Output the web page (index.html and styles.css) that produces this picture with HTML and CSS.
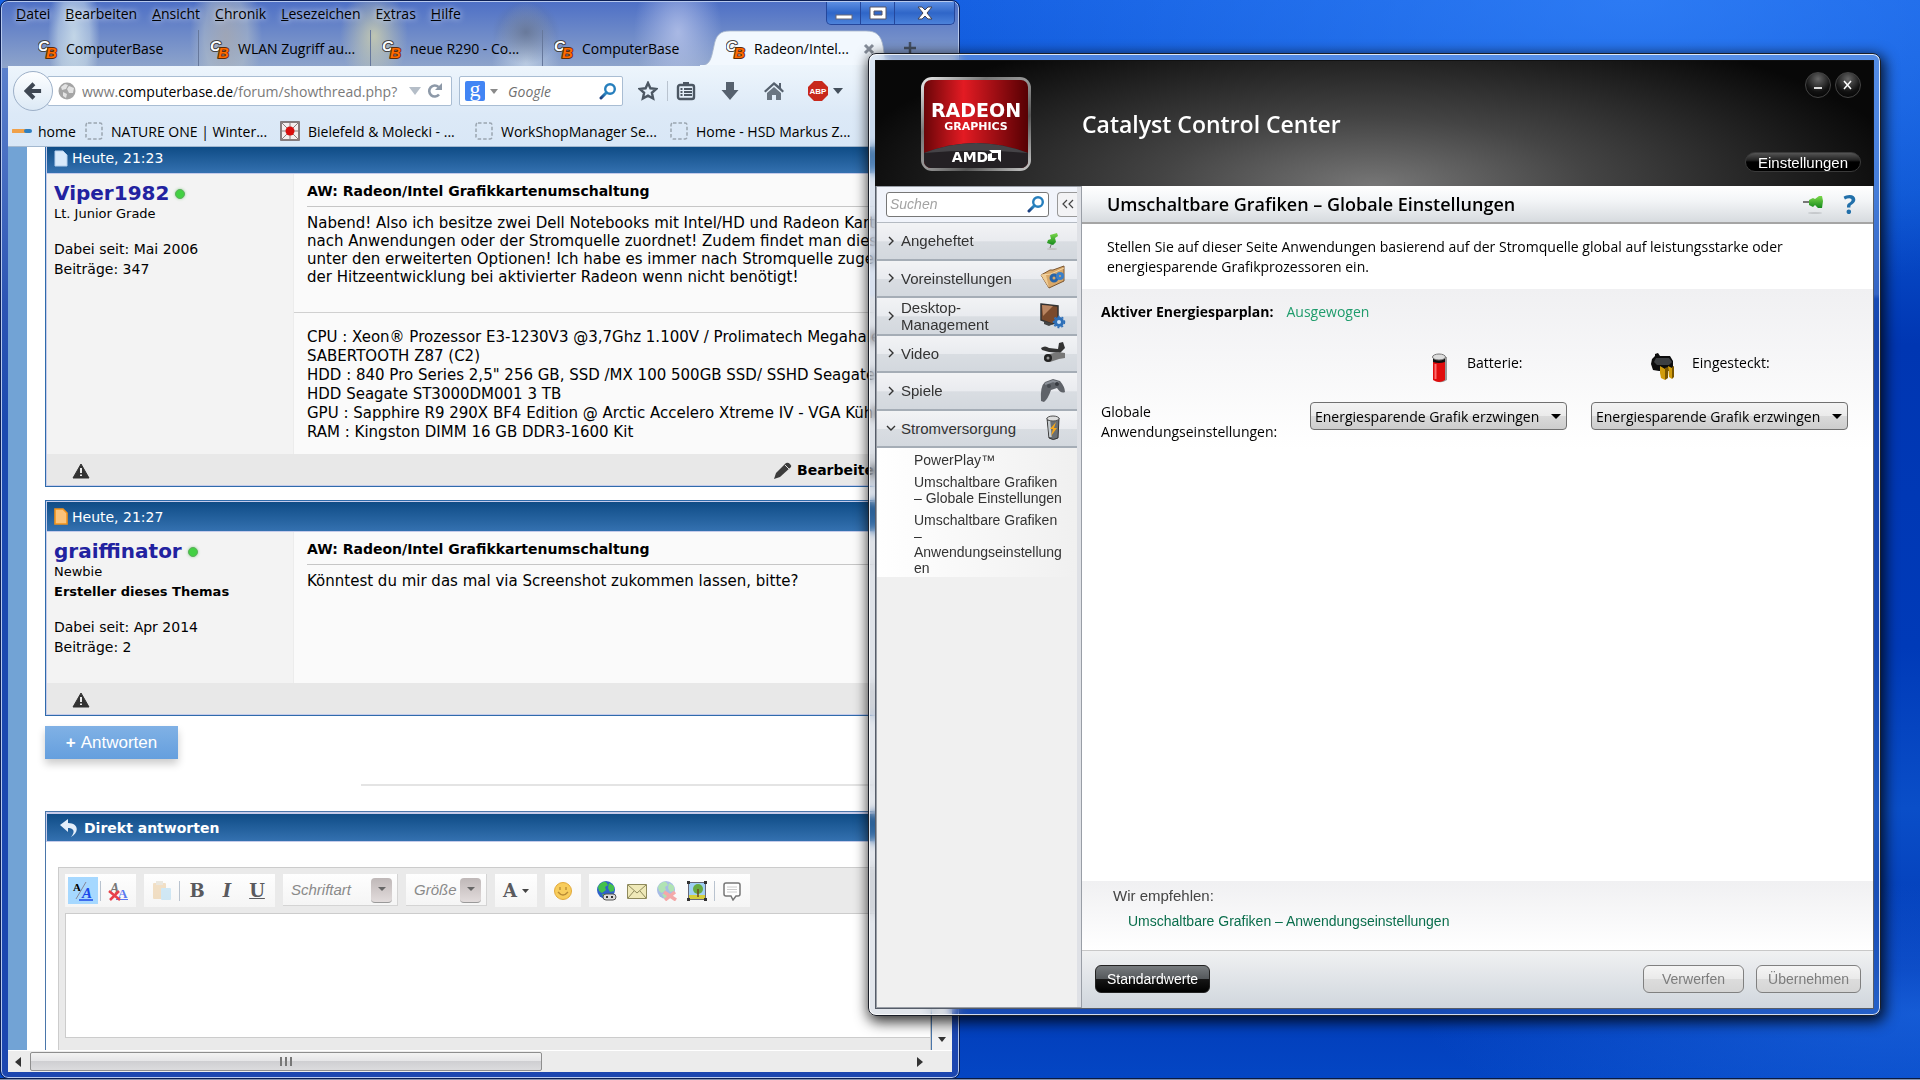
FILE: index.html
```
<!DOCTYPE html>
<html lang="de">
<head>
  <meta charset="UTF-8">
  <meta name="viewport" content="width=device-width, initial-scale=1.0">
  <title>Desktop</title>
  <link rel="stylesheet" href="styles.css">
</head>
<body>
  <svg class="defs" aria-hidden="true">
    <defs>
      <linearGradient id="lensBlue" x1="1" y1="0" x2="0" y2="1"><stop offset="0" stop-color="#2f9ad4"/><stop offset="1" stop-color="#1c3f80"/></linearGradient>
      <linearGradient id="silver" x1="0" y1="0" x2="1" y2="1"><stop offset="0" stop-color="#eee"/><stop offset=".3" stop-color="#777"/><stop offset=".5" stop-color="#999"/><stop offset=".7" stop-color="#555"/><stop offset="1" stop-color="#ccc"/></linearGradient>
      <linearGradient id="red"><stop offset="0" stop-color="#6a0508"/><stop offset=".38" stop-color="#e31b23"/><stop offset="1" stop-color="#560003"/></linearGradient>
      <linearGradient id="pinGreen" x1="0" y1="0" x2="0" y2="1"><stop offset="0" stop-color="#7bd84b"/><stop offset="1" stop-color="#168a1c"/></linearGradient>
    </defs>
    <symbol id="cb" viewBox="0 0 20 20" overflow="visible">
      <g font-family="Liberation Sans" font-weight="bold" font-style="italic" stroke-linejoin="round" paint-order="stroke">
        <text x="0" y="12" font-size="15" fill="#fff" stroke="#444" stroke-width="2">C</text>
        <text x="8" y="19" font-size="15" fill="#ff6a00" stroke="#5a2a08" stroke-width="2">B</text>
      </g>
    </symbol>
    <symbol id="lens" viewBox="0 0 18 18">
      <path d="M2 16l5.500-5.500" stroke="url(#lensBlue)" stroke-width="3" stroke-linecap="round"/>
      <circle cx="11" cy="7" r="4.800" fill="none" stroke="#277fbd" stroke-width="2.400"/>
    </symbol>
    <symbol id="blank" viewBox="0 0 18 18">
      <rect x="1" y="1" width="16" height="16" rx="2" fill="none" stroke="#9aa5b0" stroke-width="1.500" stroke-dasharray="3.500 2"/>
    </symbol>
    <symbol id="warn" viewBox="0 0 18 16">
      <path d="M9 1l8 14H1z" fill="#333" stroke="#333" stroke-linejoin="round"/>
      <path d="M9 5v5M9 11.500v1.500" stroke="#fff" stroke-width="1.800"/>
    </symbol>
    <symbol id="chev" viewBox="0 0 8 10"><path d="M2 1l4 4-4 4" fill="none" stroke="#333" stroke-width="1.400"/></symbol>
    <symbol id="globe" viewBox="0 0 20 20">
      <circle cx="9" cy="9" r="9" fill="#2e62c8"/>
      <path d="M1 6C3 1 8 0 9 1l2 3-3 2 1 3-4 3-3-2zM12 2l5 3 0 5-4 1-2-4zM5 13l5 0 1 4-4 0z" fill="#43c04c"/>
    </symbol>
  </svg>

  <main class="desktop">
    <section class="window browser" aria-label="Firefox">
      <div class="titlebar">
        <nav class="menubar">
          <a href="#"><u>D</u>atei</a>
          <a href="#"><u>B</u>earbeiten</a>
          <a href="#"><u>A</u>nsicht</a>
          <a href="#"><u>C</u>hronik</a>
          <a href="#"><u>L</u>esezeichen</a>
          <a href="#">E<u>x</u>tras</a>
          <a href="#"><u>H</u>ilfe</a>
        </nav>
        <div class="caption-buttons">
          <button aria-label="Minimieren"><svg width="18" height="14" viewBox="0 0 18 14"><rect x="1" y="9" width="16" height="4" fill="#fff" stroke="#667"/></svg></button>
          <button aria-label="Maximieren"><svg width="18" height="14" viewBox="0 0 18 14"><path d="M1 1h16v12H1zM5 5v4h8V5z" fill="#fff" stroke="#556" fill-rule="evenodd"/></svg></button>
          <button class="caption-close" aria-label="Schließen"><svg width="16" height="14" viewBox="0 0 16 14"><path d="M1 1h4l3 3 3-3h4l-5 6 5 6h-4l-3-3-3 3H1l5-6z" fill="#fff" stroke="#445"/></svg></button>
        </div>
      </div>
      <div class="tabs">
        <a class="tab" href="#"><svg width="20" height="20"><use href="#cb"/></svg>ComputerBase</a>
        <a class="tab" href="#"><svg width="20" height="20"><use href="#cb"/></svg>WLAN Zugriff au...</a>
        <a class="tab" href="#"><svg width="20" height="20"><use href="#cb"/></svg>neue R290 - Co...</a>
        <a class="tab last" href="#"><svg width="20" height="20"><use href="#cb"/></svg>ComputerBase</a>
        <div class="tab active">
          <svg class="tab-shape" viewBox="0 0 190 36" aria-hidden="true"><path d="M0 36C10 35 11 30 14 16 16 5 20 1 30 1H166C176 1 181 5 183 16 185 30 186 35 190 36z" fill="#f2f8fe" stroke="#a9b8cc" stroke-width=".8"/><path d="M0 35.500h190" stroke="#edf5fc"/></svg>
          <svg width="20" height="20"><use href="#cb"/></svg><span>Radeon/Intel...</span>
          <button aria-label="Tab schließen"><svg width="12" height="12"><path d="M2 2l8 8M10 2l-8 8" stroke="#858d99" stroke-width="3"/></svg></button>
        </div>
        <button class="new-tab" aria-label="Neuer Tab"><svg width="14" height="14"><path d="M7 1v12M1 7h12" stroke="#444f60" stroke-width="2.500"/></svg></button>
      </div>

      <div class="toolbars">
        <div class="navbar">
          <button class="back" aria-label="Zurück"><svg width="18" height="18" viewBox="0 0 20 20"><path d="M11 2L3 10l8 8M4 10h15" fill="none" stroke="#3e4753" stroke-width="4.500"/></svg></button>
          <label class="urlbar">
            <svg width="18" height="18" viewBox="0 0 18 18"><circle cx="9" cy="9" r="8.500" fill="#a5a5a5"/><path d="M3 5l4-3 3 1-2 4-4 1zM11 4l5 2-1 5-4 0-2-4zM5 10l4 2-1 4-3-2z" fill="#e3e3e3"/></svg>
            <span class="url">www.<b>computerbase.de</b>/forum/showthread.php?</span>
            <svg width="12" height="10"><path d="M0 1h12L6 9z" fill="#b5bec8"/></svg>
            <svg width="16" height="16" viewBox="0 0 16 16"><path d="M12 11.500A5.500 5.500 0 1 1 11.500 4" fill="none" stroke="#8d99a8" stroke-width="2.600"/><path d="M15 0v7H8z" fill="#8d99a8"/></svg>
          </label>
          <div class="searchbar">
            <span class="google">g</span>
            <svg width="8" height="5"><path d="M0 0h8L4 5z" fill="#8a8a8a"/></svg>
            <input type="text" placeholder="Google" aria-label="Suche">
            <svg width="18" height="18"><use href="#lens"/></svg>
          </div>
          <div class="nav-icons">
            <button aria-label="Lesezeichen setzen"><svg width="20" height="20" viewBox="0 0 20 20"><path d="M10 2l2.400 5.300 5.800.6-4.300 3.900 1.200 5.700L10 14.600l-5.100 2.900 1.200-5.700L1.800 7.900l5.800-.6z" fill="none" stroke="#4c5763" stroke-width="2.400"/></svg></button>
            <i class="sep"></i>
            <button aria-label="Lesezeichen"><svg width="20" height="20" viewBox="0 0 20 20"><rect x="2" y="4" width="16" height="14" rx="2" fill="none" stroke="#4c5763" stroke-width="2.400"/><path d="M7 4V1h6v3z" fill="#4c5763"/><path d="M4.500 8h2M8 8h8M4.500 11h2M8 11h8M4.500 14h2M8 14h8" stroke="#4c5763" stroke-width="1.800"/></svg></button>
            <button aria-label="Downloads"><svg width="20" height="20" viewBox="0 0 20 20"><path d="M6 1h8v8h4.500L10 19 1.500 9H6z" fill="#56616e"/></svg></button>
            <button aria-label="Startseite"><svg width="20" height="20" viewBox="0 0 20 20"><path d="M10 1L0 10l1.500 1.500L10 4l8.500 7.500L20 10l-3-3V2h-2v3z" fill="#56616e"/><path d="M10 6l-7 6v7h5v-5h4v5h5v-7z" fill="#6b7682"/></svg></button>
            <button class="abp" aria-label="Adblock Plus"><svg width="20" height="20" viewBox="0 0 20 20"><path d="M6 0h8l6 6v8l-6 6H6l-6-6V6z" fill="#c8281c"/><text x="10" y="13" font-family="Liberation Sans" font-size="8" font-weight="bold" fill="#fff" text-anchor="middle">ABP</text></svg><svg width="10" height="6"><path d="M0 0h10L5 6z" fill="#444f5c"/></svg></button>
          </div>
        </div>
        <nav class="bookmarks">
          <a href="#"><svg width="20" height="18" viewBox="0 0 20 18"><path d="M1 9h14" stroke="#f0a14a" stroke-width="4" stroke-linecap="round"/><path d="M14 9h4" stroke="#2f7fc0" stroke-width="4" stroke-linecap="round"/></svg>home</a>
          <a href="#"><svg width="18" height="18"><use href="#blank"/></svg>NATURE ONE | Winter...</a>
          <a href="#"><svg width="20" height="20" viewBox="0 0 20 20"><rect x="1" y="1" width="18" height="18" fill="#f4eeee" stroke="#6d6060" stroke-width="1.600"/><path d="M1 1l18 18M19 1L1 19M10 1v18M1 10h18" stroke="#8b7d7d"/><circle cx="10" cy="10" r="4.500" fill="#d90d0d"/></svg>Bielefeld &amp; Molecki - ...</a>
          <a href="#"><svg width="18" height="18"><use href="#blank"/></svg>WorkShopManager Se...</a>
          <a href="#"><svg width="18" height="18"><use href="#blank"/></svg>Home - HSD Markus Z...</a>
        </nav>
      </div>

      <div class="viewport">
        <div class="page">
          <article class="post cut">
            <header><svg width="14" height="17" viewBox="0 0 14 17"><path d="M1 1h8l4 4v11H1z" fill="#d8e9fb" stroke="#b4cfee"/></svg>Heute, 21:23</header>
            <div class="post-main">
              <aside>
                <h2><a href="#">Viper1982</a><i class="online"></i></h2>
                <p>Lt. Junior Grade</p>
                <ul><li>Dabei seit: Mai 2006</li><li>Beiträge: 347</li></ul>
              </aside>
              <div class="post-body tall">
                <h3>AW: Radeon/Intel Grafikkartenumschaltung</h3>
                <p>Nabend! Also ich besitze zwei Dell Notebooks mit Intel/HD und Radeon Karten<br>nach Anwendungen oder der Stromquelle zuordnet! Zudem findet man dieses<br>unter den erweiterten Optionen! Ich habe es immer nach Stromquelle zugeordnet<br>der Hitzeentwicklung bei aktivierter Radeon wenn nicht benötigt!</p>
                <div class="signature">CPU : Xeon® Prozessor E3-1230V3 @3,7Ghz 1.100V / Prolimatech Megahalems<br>SABERTOOTH Z87 (C2)<br>HDD : 840 Pro Series 2,5" 256 GB, SSD /MX 100 500GB SSD/ SSHD Seagate<br>HDD Seagate ST3000DM001 3 TB<br>GPU : Sapphire R9 290X BF4 Edition @ Arctic Accelero Xtreme IV - VGA Kühler<br>RAM : Kingston DIMM 16 GB DDR3-1600 Kit</div>
              </div>
            </div>
            <footer>
              <svg width="18" height="16"><use href="#warn"/></svg>
              <a class="edit" href="#"><svg width="20" height="18" viewBox="0 0 20 18"><path d="M1 17l2-6L13 1q2-1 4 1t1 3L7 15z" fill="#3c3c3c"/><path d="M12 3l4 4" stroke="#ddd"/></svg>Bearbeiten</a>
            </footer>
          </article>

          <article class="post">
            <header><svg width="14" height="17" viewBox="0 0 14 17"><path d="M1 1h8l4 4v11H1z" fill="#fbc379" stroke="#f0931c" stroke-width="1.600"/></svg>Heute, 21:27</header>
            <div class="post-main">
              <aside>
                <h2><a href="#">graiffinator</a><i class="online"></i></h2>
                <p>Newbie</p>
                <p><b>Ersteller dieses Themas</b></p>
                <ul><li>Dabei seit: Apr 2014</li><li>Beiträge: 2</li></ul>
              </aside>
              <div class="post-body">
                <h3>AW: Radeon/Intel Grafikkartenumschaltung</h3>
                <p>Könntest du mir das mal via Screenshot zukommen lassen, bitte?</p>
              </div>
            </div>
            <footer><svg width="18" height="16"><use href="#warn"/></svg></footer>
          </article>

          <button class="reply"><b>+</b> Antworten</button>
          <hr class="divider">

          <section class="quick">
            <h3><svg width="20" height="20" viewBox="0 0 20 20"><path d="M1 7l8-6v4c10 0 12 9 3 14 5-6 2-9-3-9v4z" fill="#e4eefa"/></svg>Direkt antworten</h3>
            <div class="editor">
              <div class="editor-bar">
                <div class="group">
                  <button class="on" aria-label="Editor wechseln"><svg width="22" height="20" viewBox="0 0 22 20"><text x="1" y="10" font-family="Liberation Serif" font-weight="bold" font-size="11">A</text><text x="10" y="17" font-family="Liberation Serif" font-weight="bold" font-style="italic" font-size="15" fill="#1a48e8">A</text><path d="M4 18L14 1" stroke="#889"/><path d="M7 19h14" stroke="#1a48e8" stroke-width="1.500"/></svg></button>
                  <i class="sep"></i>
                  <button aria-label="Formatierung entfernen"><svg width="20" height="20" viewBox="0 0 20 20"><text x="2" y="12" font-family="Liberation Serif" font-weight="bold" font-style="italic" font-size="14" fill="#777">A</text><text x="10" y="17" font-family="Liberation Serif" font-weight="bold" font-size="13" fill="#5a78f0">A</text><path d="M8 18.500h12" stroke="#5a78f0"/><path d="M1 10l11 9M11 10L2 19" stroke="#e8404a" stroke-width="2.500"/></svg></button>
                </div>
                <div class="group">
                  <button aria-label="Einfügen"><svg width="20" height="20" viewBox="0 0 20 20" opacity=".45"><rect x="1" y="2" width="13" height="16" rx="1" fill="#e8bf85"/><rect x="4" y="0" width="7" height="4" fill="#d8d0bc"/><rect x="9" y="7" width="10" height="12" rx="1" fill="#9fd3f0"/></svg></button>
                  <i class="sep"></i>
                  <button class="letter">B</button>
                  <button class="letter"><em>I</em></button>
                  <button class="letter"><u>U</u></button>
                </div>
                <label class="combo font"><select aria-label="Schriftart"><option>Schriftart</option></select></label>
                <label class="combo size"><select aria-label="Größe"><option>Größe</option></select></label>
                <div class="group"><button class="letter color">A<svg width="7" height="4"><path d="M0 0h7L3.500 4z" fill="#444"/></svg></button></div>
                <div class="group"><button aria-label="Smiley"><svg width="20" height="20" viewBox="0 0 20 20"><circle cx="10" cy="10" r="8.500" fill="#f8cd5c" stroke="#e2a93b"/><path d="M7 6v3M13 6v3M5 11q5 6 10 0" fill="none" stroke="#b98a35" stroke-width="1.300"/></svg></button></div>
                <div class="group">
                  <button aria-label="Link"><svg width="20" height="20" viewBox="0 0 20 20"><use href="#globe" width="20" height="20"/><rect x="6" y="13" width="13" height="6" rx="3" fill="#ddd" stroke="#555"/><path d="M10 15v2M15 15v2" stroke="#333" stroke-width="2"/></svg></button>
                  <button aria-label="E-Mail"><svg width="20" height="20" viewBox="0 0 20 20"><path d="M.5 3.500h19v14H.5z" fill="#efe9b8" stroke="#8f8a5c"/><path d="M1 4l9 8 9-8M1 17l6-7M19 17l-6-7" fill="none" stroke="#8f8a5c"/></svg></button>
                  <button aria-label="Link entfernen"><svg width="20" height="20" viewBox="0 0 20 20" opacity=".4"><use href="#globe" width="20" height="20"/><path d="M7 11l12 8M18 11L8 19" stroke="#e33" stroke-width="3.500"/></svg></button>
                  <button aria-label="Grafik"><svg width="20" height="20" viewBox="0 0 20 20"><rect x="1.500" y="1.500" width="17" height="17" fill="#9fd0f4" stroke="#667"/><path d="M2 14h16v4H2z" fill="#d5cd3c"/><circle cx="11" cy="8" r="5" fill="#67aa40"/><path d="M11 8v8" stroke="#6c4a1c" stroke-width="1.500"/><path d="M0 0h3v3H0zM17 0h3v3h-3zM0 17h3v3H0zM17 17h3v3h-3z" fill="#333"/></svg></button>
                  <i class="sep"></i>
                  <button aria-label="Zitat"><svg width="20" height="20" viewBox="0 0 20 20"><path d="M4 2h12q2 0 2 2v9q0 2-2 2h-2l-3 4-2-4H4q-2 0-2-2V4q0-2 2-2z" fill="#fff" stroke="#777" stroke-width="1.500"/><path d="M5 6h10M5 8.500h10M5 11h10" stroke="#ccc"/></svg></button>
                </div>
              </div>
              <textarea aria-label="Nachricht"></textarea>
            </div>
          </section>
        </div>
        <div class="vscroll"><svg width="8" height="5"><path d="M0 0h8L4 5z" fill="#333"/></svg></div>
      </div>
      <div class="hscroll">
        <svg width="6" height="10"><path d="M6 0v10L0 5z" fill="#333"/></svg>
        <div class="thumb"><i></i><i></i><i></i></div>
        <svg width="6" height="10"><path d="M0 0v10l6-5z" fill="#333"/></svg>
      </div>
    </section>

    <section class="window ccc" aria-label="Catalyst Control Center">
      <header class="ccc-head">
        <svg class="badge" width="112" height="96" viewBox="0 0 112 96">
          <rect x="1" y="1" width="110" height="94" rx="11" fill="url(#silver)"/>
          <clipPath id="inner"><rect x="4" y="4" width="104" height="88" rx="7"/></clipPath>
          <g clip-path="url(#inner)">
            <rect x="4" y="4" width="104" height="88" fill="url(#red)"/>
            <path d="M4 77Q56 57 108 77V92H4z" fill="#242024"/>
            <path d="M4 77Q56 57 108 77Q56 72 4 77z" fill="#454347"/>
          </g>
          <g fill="#fff" font-weight="bold" text-anchor="middle">
            <text x="56" y="41" font-family="DejaVu Sans" font-size="19">RADEON</text>
            <text x="56" y="54" font-family="DejaVu Sans" font-size="11">GRAPHICS</text>
            <text x="50" y="86" font-family="DejaVu Sans" font-size="14">AMD</text>
          </g>
          <path d="M69 74h12v12l-3-3v-6h-6zM68 78v7h6l3-3h-5v-5z" fill="#fff"/>
        </svg>
        <h1>Catalyst Control Center</h1>
        <div class="ccc-tools">
          <div class="rounds">
            <button aria-label="Minimieren"><svg width="10" height="10"><path d="M1 8h8" stroke="#ddd" stroke-width="2"/></svg></button>
            <button aria-label="Schließen"><svg width="10" height="10"><path d="M1 1l7 8M8 1L1 9" stroke="#fff" stroke-width="1.500"/></svg></button>
          </div>
          <button class="pill">Einstellungen</button>
        </div>
      </header>
      <div class="ccc-body">
        <aside class="side">
          <div class="side-search">
            <label class="side-input"><input type="text" placeholder="Suchen" aria-label="Suchen"><svg width="18" height="18"><use href="#lens"/></svg></label>
            <button class="collapse" aria-label="Einklappen"><svg width="12" height="10"><path d="M5 1L1 5l4 4M11 1L7 5l4 4" fill="none" stroke="#444" stroke-width="1.200"/></svg></button>
          </div>
          <nav class="cats">
            <a href="#"><svg class="chev"><use href="#chev"/></svg><span>Angeheftet</span><svg width="26" height="26" viewBox="0 0 26 26"><ellipse cx="12" cy="21" rx="5" ry="1" fill="#c4c4c4"/><path d="M12 14l-2 6" stroke="#777"/><path d="M10 7l7-2 1 3-3 2 1 4-3 3-6-2 1-3 3-1z" fill="url(#pinGreen)"/></svg></a>
            <a href="#"><svg class="chev"><use href="#chev"/></svg><span>Voreinstellungen</span><svg width="26" height="26" viewBox="0 0 26 26"><path d="M1 10l9-5h3l11-4v15L9 23z" fill="#d9a868" stroke="#7a5530"/><path d="M1 10l10-1 13-6" fill="none" stroke="#f4d7a8"/><path d="M1 10l5 0 3 13z" fill="#f0cd96"/><circle cx="14" cy="13" r="3" fill="none" stroke="#2864a8" stroke-width="3"/><circle cx="20" cy="11" r="2.500" fill="none" stroke="#3b7fc8" stroke-width="3"/></svg></a>
            <a href="#"><svg class="chev"><use href="#chev"/></svg><span>Desktop-Management</span><svg width="26" height="26" viewBox="0 0 26 26"><path d="M1 1l17 2v16l-6 2-11-4z" fill="#7a4a2c" stroke="#333" stroke-width="1.500"/><path d="M2 2l11 1L3 13z" fill="#b98561"/><path d="M4 18l9 3-4 2-5-2z" fill="#444"/><circle cx="19" cy="19" r="3.500" fill="#cfe2f6" stroke="#2d6fb8" stroke-width="3"/><circle cx="19" cy="19" r="5.500" fill="none" stroke="#2d6fb8" stroke-width="1.500" stroke-dasharray="2 2"/></svg></a>
            <a href="#"><svg class="chev"><use href="#chev"/></svg><span>Video</span><svg width="26" height="26" viewBox="0 0 26 26"><path d="M1 8q4-3 8 0l9 1 1-6 4-1 2 6-5 5-11-1-7-2z" fill="#333"/><path d="M5 15l13-3 7 1v5l-6 1-9 3-6-2z" fill="#777"/><circle cx="8" cy="18" r="4" fill="#222"/><circle cx="8" cy="18" r="1.500" fill="#999"/></svg></a>
            <a href="#"><svg class="chev"><use href="#chev"/></svg><span>Spiele</span><svg width="26" height="26" viewBox="0 0 26 26"><path d="M1 23Q0 8 5 4l8-3 7 2q5 6 5 11-4 2-8-4l-6 2q-3 9-7 12z" fill="#5f6369"/><path d="M5 6l8-3 6 2" stroke="#8b9098" fill="none" stroke-width="2"/><circle cx="9" cy="8" r="2" fill="#45494f"/><circle cx="17" cy="6" r="2" fill="#373a40"/></svg></a>
            <a href="#"><svg class="chev open"><use href="#chev"/></svg><span>Stromversorgung</span><svg width="26" height="26" viewBox="0 0 26 26"><path d="M7 3q6-3 12 0l-1 20q-5 3-9 0z" fill="#6a6f73" stroke="#333"/><ellipse cx="13" cy="3.500" rx="6" ry="2.500" fill="#ddd" stroke="#555"/><path d="M9 6l1.500 16" stroke="#c5cacd" stroke-width="2.500"/><path d="M16 7l-6 7h3l-2 7 6-8h-3z" fill="#f5a81c"/></svg></a>
          </nav>
          <ul class="sub">
            <li><a href="#">PowerPlay™</a></li>
            <li><a href="#">Umschaltbare Grafiken – Globale Einstellungen</a></li>
            <li><a href="#">Umschaltbare Grafiken – Anwendungseinstellungen</a></li>
          </ul>
        </aside>
        <div class="content">
          <div class="content-title">
            <h2>Umschaltbare Grafiken – Globale Einstellungen</h2>
            <button aria-label="Anheften"><svg width="22" height="22" viewBox="0 0 22 22"><path d="M1 9h7" stroke="#777" stroke-width="2"/><path d="M7 7l4-2 2 1 4-3h3l1 5-1 7h-4l-3-3-2 2-4-2z" fill="url(#pinGreen)"/><ellipse cx="13" cy="20" rx="7" ry="1" fill="#c6c9cc"/></svg></button>
            <button class="help" aria-label="Hilfe">?</button>
          </div>
          <p class="intro">Stellen Sie auf dieser Seite Anwendungen basierend auf der Stromquelle global auf leistungsstarke oder<br>energiesparende Grafikprozessoren ein.</p>
          <form class="settings">
            <p class="plan"><b>Aktiver Energiesparplan:</b><span>Ausgewogen</span></p>
            <div class="row">
              <span></span>
              <div class="source"><svg width="16" height="31" viewBox="0 0 16 31"><path d="M3 4h12v23q-6 4-11 1z" fill="#999"/><path d="M1 4h12v23q-6 4-12 0z" fill="#e00d0d"/><path d="M1 5h12v4q-6 2-12 0z" fill="#111"/><ellipse cx="7" cy="4" rx="6.500" ry="3" fill="#ddd" stroke="#777"/><path d="M3.500 11v15" stroke="#ff6d6d" stroke-width="2"/></svg>Batterie:</div>
              <div class="source"><svg width="25" height="28" viewBox="0 0 25 28"><path d="M4 1l3-1 2 3h10l3 5v6l-3 4H8l-6-1-2-6 1-5 3-3z" fill="#0d0d0d"/><path d="M5 5h13l3 4-3 3H6L3 9z" fill="#3c3f42"/><path d="M9 13l5 3v11l-4-2-1-5zM17 13l4 2v11l-3-2z" fill="#d09c0c"/><path d="M14 15l3-1v11l-3 2zM21 14l2-1v11l-2 2z" fill="#7a5600"/></svg>Eingesteckt:</div>
            </div>
            <div class="row">
              <span>Globale<br>Anwendungseinstellungen:</span>
              <label class="drop"><select aria-label="Batterie"><option>Energiesparende Grafik erzwingen</option></select></label>
              <label class="drop"><select aria-label="Eingesteckt"><option>Energiesparende Grafik erzwingen</option></select></label>
            </div>
          </form>
          <div class="recommend">
            <p>Wir empfehlen:</p>
            <a href="#">Umschaltbare Grafiken – Anwendungseinstellungen</a>
          </div>
          <footer class="actions">
            <button class="dark">Standardwerte</button>
            <button disabled>Verwerfen</button>
            <button disabled>Übernehmen</button>
          </footer>
        </div>
      </div>
    </section>
  </main>
  <div class="taskbar"></div>
</body>
</html>
```
FILE: styles.css
```
* {
  box-sizing: border-box;
}
body {
  margin: 0;
  height: 100vh;
  display: flex;
  flex-direction: column;
  overflow: hidden;
  font-family: "Open Sans", "Noto Sans", sans-serif;
  font-size: 14px;
  color: #000;
}
h1, h2, h3, p, ul, hr {
  margin: 0;
  padding: 0;
}
ul {
  list-style: none;
}
a {
  color: inherit;
  text-decoration: none;
}
button {
  font: inherit;
  color: inherit;
  padding: 0;
  border: 0;
  background: none;
  display: flex;
  align-items: center;
  justify-content: center;
}
svg {
  flex: none;
  display: block;
}
.defs {
  position: absolute;
  width: 0;
  height: 0;
}
.desktop {
  position: relative;
  flex: 1;
  background:
    radial-gradient(ellipse 500px 130px at 100% 94%, rgba(40, 120, 240, .5), transparent),
    radial-gradient(ellipse 700px 300px at 85% 0, rgba(60, 140, 255, .6), transparent),
    linear-gradient(#1560e2, #0a52d0 18%, #0036b2 32%, #003ab8 60%, #0a4ec8 75%, #0038b4 90%, #0446c4);
}
.taskbar {
  height: 2px;
  background: #8490ac;
  border-top: 1px solid #0a1a40;
}
.window {
  position: absolute;
  display: flex;
  flex-direction: column;
}

/* Browser */
.browser {
  inset: 1px calc(50% + 1px) 0 1px;
  padding: 0 6px 5px;
  border: 1px solid #b7c9ee;
  outline: 1px solid #0c1f55;
  border-radius: 7px;
  background:
    radial-gradient(ellipse 26px 70px at 72px 34px, rgba(215, 232, 238, .8), rgba(215, 232, 238, .5) 60%, transparent),
    radial-gradient(ellipse 36px 70px at 224px 34px, rgba(170, 172, 178, .8), rgba(185, 195, 200, .5) 60%, transparent),
    radial-gradient(ellipse 34px 50px at 372px 34px, rgba(225, 222, 170, .7), transparent),
    radial-gradient(ellipse 34px 32px at 524px 30px, rgba(95, 110, 140, .8), transparent),
    radial-gradient(ellipse 34px 60px at 524px 60px, rgba(205, 220, 235, .7), transparent),
    radial-gradient(ellipse 44px 70px at 676px 30px, rgba(195, 205, 240, .7), transparent),
    linear-gradient(#4e70c6, #8fa5cb 66px, #5b80cc 66px, #2d55b4 300px, #1c4ab0 420px, #1c46b0);
}
.titlebar {
  display: flex;
  justify-content: space-between;
  height: 28px;
}
.menubar {
  display: flex;
  gap: 15px;
  padding: 0 0 0 8px;
  line-height: 24px;
}
.menubar a {
  text-shadow: 0 0 6px #fff;
}
.caption-buttons {
  display: flex;
  height: 23px;
  margin-right: -3px;
  border: 1px solid #24479c;
  border-top: 0;
  border-radius: 0 0 5px 5px;
  background: linear-gradient(#5c8ee2, #2f66c8 50%, #4c82da);
}
.caption-buttons button {
  width: 34px;
  border-right: 1px solid #24479c;
}
.caption-buttons .caption-close {
  width: 59px;
  border: 0;
}
.tabs {
  display: flex;
  height: 36px;
  padding-left: 19px;
}
.tab {
  position: relative;
  display: flex;
  align-items: center;
  gap: 8px;
  width: 172px;
  padding: 1px 0 0 11px;
  border-right: 1px solid #66789c;
}
.tab.last, .tab.active {
  border: 0;
}
.tab > * {
  position: relative;
}
.tab .tab-shape {
  position: absolute;
  left: -15px;
  top: 0;
  width: 190px;
  height: 36px;
}
.tab.active span {
  flex: 1;
}
.tab.active button {
  margin-right: 12px;
}
.new-tab {
  margin-left: 16px;
}
.toolbars {
  height: 81px;
  background: linear-gradient(#edf5fc, #dce9f7 60%, #d9e7f6);
  border-bottom: 1px solid #a3b8cf;
}
.navbar {
  display: flex;
  align-items: center;
  height: 50px;
  padding-left: 5px;
}
.back {
  position: relative;
  z-index: 1;
  width: 40px;
  height: 40px;
  border: 1px solid #9db0c8;
  border-radius: 50%;
  background: linear-gradient(#fdfeff, #dce9f5);
}
.urlbar, .searchbar {
  display: flex;
  align-items: center;
  height: 30px;
  border: 1px solid #a9bdd3;
  border-radius: 2px;
  background: #fff;
}
.urlbar {
  width: 405px;
  margin-left: -6px;
  padding: 0 8px 0 10px;
  gap: 6px;
}
.url {
  flex: 1;
  color: #7a7a7a;
  white-space: nowrap;
  overflow: hidden;
}
.url b {
  font-weight: normal;
  color: #000;
}
.searchbar {
  width: 164px;
  margin-left: 7px;
  padding: 0 5px;
  gap: 5px;
}
.searchbar input {
  width: 90px;
  flex: 1;
  min-width: 0;
  border: 0;
  padding: 0 5px;
  font: italic 14px "Open Sans", sans-serif;
}
.searchbar input::placeholder {
  color: #6f6f6f;
}
.google {
  width: 20px;
  height: 20px;
  background: #4285f4;
  border-radius: 2px;
  color: #fff;
  font: 22px/15px "Liberation Serif", serif;
  text-align: center;
}
.nav-icons {
  display: flex;
  align-items: center;
  margin-left: 15px;
}
.nav-icons button {
  margin-right: 24px;
}
.nav-icons button:first-child {
  margin-right: 9px;
}
.nav-icons .abp {
  gap: 5px;
}
.sep {
  width: 1px;
  height: 20px;
  margin-right: 8px;
  background: #b9c3cf;
}
.bookmarks {
  display: flex;
  padding: 5px 0 0 4px;
  white-space: nowrap;
  overflow: hidden;
}
.bookmarks a {
  display: flex;
  align-items: center;
  flex: none;
  gap: 8px;
  width: 195px;
}
.bookmarks a:first-child {
  gap: 6px;
  width: 73px;
}
.viewport {
  flex: 1;
  min-height: 0;
  display: flex;
  background: #fff;
}
.page {
  flex: 1;
  min-width: 0;
  overflow: hidden;
  padding-left: 18px;
  border-left: 19px solid #72a3d5;
  font: 14px "DejaVu Sans", Verdana, sans-serif;
  display: flex;
  flex-direction: column;
  align-items: stretch;
}
.post {
  flex: none;
  border: 1px solid #2f6bab;
  box-shadow: inset 0 0 0 1px #c5cbea;
  padding: 1px 0 1px 1px;
  margin-bottom: 13px;
}
.post.cut {
  border-top: 0;
  padding-top: 0;
}
.post header {
  display: flex;
  align-items: center;
  gap: 4px;
  height: 30px;
  padding-left: 7px;
  color: #fff;
  border-bottom: 1px solid #c5cbea;
  background: linear-gradient(#0f4c86, #3471b0);
}
.post.cut header {
  height: 27px;
  padding-bottom: 4px;
}
.post-main {
  display: flex;
}
.post aside {
  width: 247px;
  flex: none;
  padding: 9px 7px;
  line-height: 20px;
  font-size: 13px;
  background: #f3f3f3;
  border-right: 1px solid #ececec;
}
.post aside h2 {
  display: flex;
  align-items: center;
  gap: 6px;
  font-size: 20px;
  line-height: 21px;
  color: #2222a0;
}
.online {
  width: 10px;
  height: 10px;
  border-radius: 50%;
  border: 1px solid #5cae5c;
  background: #42d042;
  box-shadow: 0 0 3px #9c9;
}
.post aside ul {
  margin-top: 15px;
  font-size: 14px;
}
.post-body {
  flex: 1;
  min-width: 0;
  height: 151px;
  padding: 8px 0 0 13px;
  overflow: hidden;
  white-space: nowrap;
  font-size: 15px;
  line-height: 18px;
  background: #fafafa;
}
.post-body.tall {
  height: 280px;
}
.post-body h3 {
  font-size: 14px;
  height: 25px;
  line-height: 19px;
  border-bottom: 1px solid #c6c6c6;
  margin-bottom: 7px;
}
.signature {
  margin: 26px 0 0 -13px;
  padding: 15px 0 0 13px;
  border-top: 1px solid #d0d0d0;
  line-height: 19px;
}
.post footer {
  display: flex;
  align-items: center;
  height: 31px;
  padding: 2px 0 0 25px;
  background: #e8e8e8;
}
.edit {
  display: flex;
  gap: 4px;
  margin-left: 683px;
  font-weight: bold;
}
.reply {
  align-self: flex-start;
  flex: none;
  width: 133px;
  height: 33px;
  margin-top: -3px;
  gap: 5px;
  color: #fff;
  font: 17px "Liberation Sans", sans-serif;
  background: linear-gradient(#80b1e5, #659fde);
  box-shadow: 0 5px 8px rgba(0, 0, 0, .2);
}
.divider {
  flex: none;
  width: 100%;
  height: 2px;
  margin: 25px 0 25px 316px;
  border: 0;
  background: #e4e4e4;
}
.quick {
  flex: 1;
  min-height: 0;
  border: 1px solid #4a76aa;
  border-bottom: 0;
}
.quick h3 {
  display: flex;
  align-items: center;
  gap: 5px;
  height: 30px;
  padding-left: 12px;
  color: #fff;
  font-size: 14px;
  border-top: 2px solid #c5cbea;
  border-left: 1px solid #c5cbea;
  border-bottom: 1px solid #c5cbea;
  background: linear-gradient(#0f4c86, #3471b0);
}
.editor {
  height: 250px;
  margin: 25px 0 0 12px;
  padding: 6px;
  padding-right: 0;
  border: 1px solid #ccc;
  background: #eaeaea;
}
.editor-bar {
  display: flex;
  gap: 8px;
  height: 39px;
}
.group, .combo {
  display: flex;
  align-items: center;
  height: 33px;
  padding: 0 3px;
  background: linear-gradient(#fefefe, #f5f5f5);
}
.group button {
  width: 30px;
  height: 27px;
}
.group .on {
  background: #a6d8ff;
}
.group .sep {
  margin: 0 2px;
}
.group .letter {
  font: bold 18px "DejaVu Serif", "Liberation Serif", serif;
  color: #5a5a5e;
}
.group .color {
  gap: 5px;
  width: 36px;
}
.combo {
  position: relative;
  height: 32px;
  padding: 0 5px 0 8px;
  border-right: 1px solid #d4d4d4;
  border-bottom: 1px solid #d4d4d4;
}
.combo.font {
  width: 115px;
}
.combo.size {
  width: 81px;
}
.combo select {
  appearance: none;
  width: 100%;
  border: 0;
  padding: 0;
  background: none;
  font: italic 15px "Liberation Sans", sans-serif;
  color: #8a8a8a;
}
.combo::before {
  content: "";
  position: absolute;
  right: 5px;
  top: 4px;
  width: 21px;
  height: 24px;
  border-radius: 4px;
  background: linear-gradient(#bfb8b8, #e2dcdc);
  border-bottom: 1px solid #999;
  pointer-events: none;
}
.combo::after {
  content: "";
  position: absolute;
  right: 11px;
  top: 13px;
  border: 4px solid transparent;
  border-top-color: #666;
  border-bottom: 0;
  pointer-events: none;
}
.editor textarea {
  display: block;
  width: 100%;
  height: 125px;
  border: 1px solid #ccc;
  border-right: 0;
  resize: none;
  background: #fff;
}
.vscroll {
  width: 20px;
  display: flex;
  align-items: flex-end;
  justify-content: center;
  padding-bottom: 8px;
  background: #f1f1f1;
}
.hscroll {
  display: flex;
  align-items: center;
  height: 22px;
  padding: 1px 29px 1px 7px;
  border-top: 1px solid #fff;
  background: #ececec;
}
.thumb {
  display: flex;
  align-items: center;
  justify-content: center;
  gap: 3px;
  width: 512px;
  height: 19px;
  margin: 0 auto 0 9px;
  border: 1px solid #8e8e8e;
  border-radius: 2px;
  background: linear-gradient(#f3f3f3, #e6e6e8 45%, #cfcfd2 50%, #dcdcde);
}
.thumb i {
  width: 2px;
  height: 9px;
  background: #777;
}

/* Catalyst Control Center */
.ccc {
  inset: 53px 39px 62px 868px;
  padding: 6px;
  border: 1px solid #1b1f28;
  border-radius: 8px;
  background: linear-gradient(rgba(180, 200, 225, .35), rgba(150, 175, 215, .35) 240px, rgba(110, 130, 160, .2) 245px);
  backdrop-filter: blur(5px);
  box-shadow: inset 0 0 0 1px rgba(255, 255, 255, .8), 2px 4px 14px 2px rgba(0, 0, 0, .8);
  font-family: "Liberation Sans", sans-serif;
}
.ccc-head {
  display: flex;
  height: 126px;
  padding: 15px 12px 0 44px;
  border: 1px solid #111;
  border-bottom: 0;
  color: #fff;
  background: radial-gradient(ellipse 540px 170px at 50% 100%, #777, #444 40%, #080808);
}
.ccc-head h1 {
  flex: 1;
  margin-left: 50px;
  font: 600 23px/96px "Open Sans", sans-serif;
}
.ccc-tools {
  display: flex;
  flex-direction: column;
  align-items: flex-end;
  justify-content: space-between;
  padding: 0 0 14px;
  margin-top: -4px;
}
.rounds {
  display: flex;
  gap: 4px;
}
.rounds button {
  width: 26px;
  height: 26px;
  border: 1px solid #444;
  border-radius: 50%;
  background: radial-gradient(circle at 50% 25%, #666, #111 60%, #000);
}
.pill {
  width: 116px;
  height: 20px;
  border: 1px solid #3a3a3a;
  border-radius: 10px;
  background: linear-gradient(#555, #222 40%, #000 50%);
  font-size: 15px;
}
.ccc-body {
  flex: 1;
  min-height: 0;
  display: flex;
  border: 1px solid #555c68;
  border-top: 0;
  background: #fff;
}
.side {
  width: 206px;
  flex: none;
  background: #f0f0f0;
  border-right: 5px solid #dfe1e6;
  outline: 1px solid #999ea6;
  outline-offset: -1px;
}
.side-search {
  display: flex;
  align-items: center;
  justify-content: space-between;
  height: 37px;
  padding-left: 10px;
  border-bottom: 1px solid #b4bac2;
  background: #f1f4fb;
}
.side-input {
  display: flex;
  align-items: center;
  width: 163px;
  height: 25px;
  border: 1px solid #777;
  border-radius: 3px;
  padding-right: 3px;
  background: #fff;
}
.side-input input {
  flex: 1;
  min-width: 0;
  border: 0;
  padding: 0 3px;
  background: none;
  font: italic 14px "Liberation Sans", sans-serif;
}
.side-input input::placeholder {
  color: #a3a3a3;
}
.collapse {
  width: 20px;
  height: 25px;
  border: 1px solid #999;
  border-right: 0;
  border-radius: 4px 0 0 4px;
  background: #f3f3f5;
}
.cats {
  display: grid;
  grid-auto-rows: 1fr;
  height: 225px;
}
.cats a {
  display: flex;
  align-items: center;
  gap: 6px;
  padding: 0 11px;
  border-bottom: 2px solid #a5adb6;
  background: linear-gradient(#f2f3f5, #e9ebef 50%, #d9dde2 52%, #d3d8de);
  font-size: 15px;
  line-height: 17px;
  color: #333;
}
.cats span {
  flex: 1;
  min-width: 0;
}
.chev {
  width: 8px;
  height: 10px;
}
.chev.open {
  transform: rotate(90deg);
}
.sub {
  padding: 4px 10px 1px 38px;
  background: linear-gradient(90deg, #fff, #f0f0f0);
  font-size: 14px;
  line-height: 16px;
  color: #333;
}
.sub li {
  margin-bottom: 6px;
  overflow-wrap: anywhere;
}
.sub li:last-child {
  margin: 0;
}
.content {
  flex: 1;
  min-width: 0;
  display: flex;
  flex-direction: column;
  font-family: "Open Sans", "Noto Sans", sans-serif;
}
.content-title {
  display: flex;
  align-items: center;
  gap: 20px;
  height: 38px;
  padding: 0 17px 0 25px;
  border-bottom: 2px solid #a5a5a5;
  background: linear-gradient(#fff, #f3f5f7 40%, #d7dbdf);
}
.content-title h2 {
  flex: 1;
  font-size: 18px;
  font-weight: 600;
}
.help {
  font: bold 26px "Open Sans", sans-serif;
  color: #2270aa;
}
.intro {
  padding: 13px 25px 12px;
  line-height: 20px;
}
.settings {
  flex: 1;
  padding: 13px 25px 0 19px;
  line-height: 20px;
  background: linear-gradient(#f0f0f2, #fff 160px);
}
.plan {
  display: flex;
  gap: 13px;
}
.plan span {
  color: #1f9c6c;
}
.row {
  display: grid;
  grid-template-columns: 209px 257px 257px;
  align-items: start;
  margin-top: 31px;
}
.row .drop:last-child {
  margin-left: 24px;
}
.row:last-child {
  margin-top: 18px;
}
.source {
  display: flex;
  gap: 19px;
  padding-left: 122px;
}
.source:last-child {
  gap: 16px;
  padding-left: 84px;
}
.drop {
  position: relative;
  width: 257px;
}
.drop select {
  appearance: none;
  width: 100%;
  height: 28px;
  padding: 0 4px;
  border: 1px solid #707070;
  border-radius: 4px;
  background: linear-gradient(#f3f3f3, #ebebeb 50%, #dadada 51%, #cdcdcd);
  font: 14px "Open Sans", sans-serif;
  color: #000;
}
.drop::after {
  content: "";
  position: absolute;
  right: 6px;
  top: 12px;
  border: 5px solid transparent;
  border-top-color: #000;
  border-bottom: 0;
  pointer-events: none;
}
.recommend {
  height: 69px;
  padding: 6px 31px;
  background: linear-gradient(#f0f0f2, #fff);
  font: 15px/18px "Liberation Sans", sans-serif;
  color: #444;
}
.recommend a {
  display: block;
  margin: 7px 0 0 15px;
  font-size: 14px;
  color: #0a6e4c;
}
.actions {
  display: flex;
  align-items: center;
  gap: 12px;
  height: 58px;
  padding: 0 12px 2px 13px;
  border-top: 1px solid #c8c8c8;
  background: linear-gradient(#f0f1f2, #d0d6dd);
}
.actions button {
  height: 28px;
  padding: 0 11px;
  border: 1px solid #808080;
  border-radius: 6px;
  background: linear-gradient(#f5f5f5, #eaeaea 50%, #dcdcdc 51%, #d5d5d5);
  font: 14px "Liberation Sans", sans-serif;
  color: #7c7c7c;
}
.actions button:nth-child(2) {
  padding: 0 18px;
}
.actions .dark {
  margin-right: auto;
  border-color: #222;
  background: linear-gradient(#777b7e, #54585b 50%, #151515 52%, #000);
  color: #fff;
}
```
